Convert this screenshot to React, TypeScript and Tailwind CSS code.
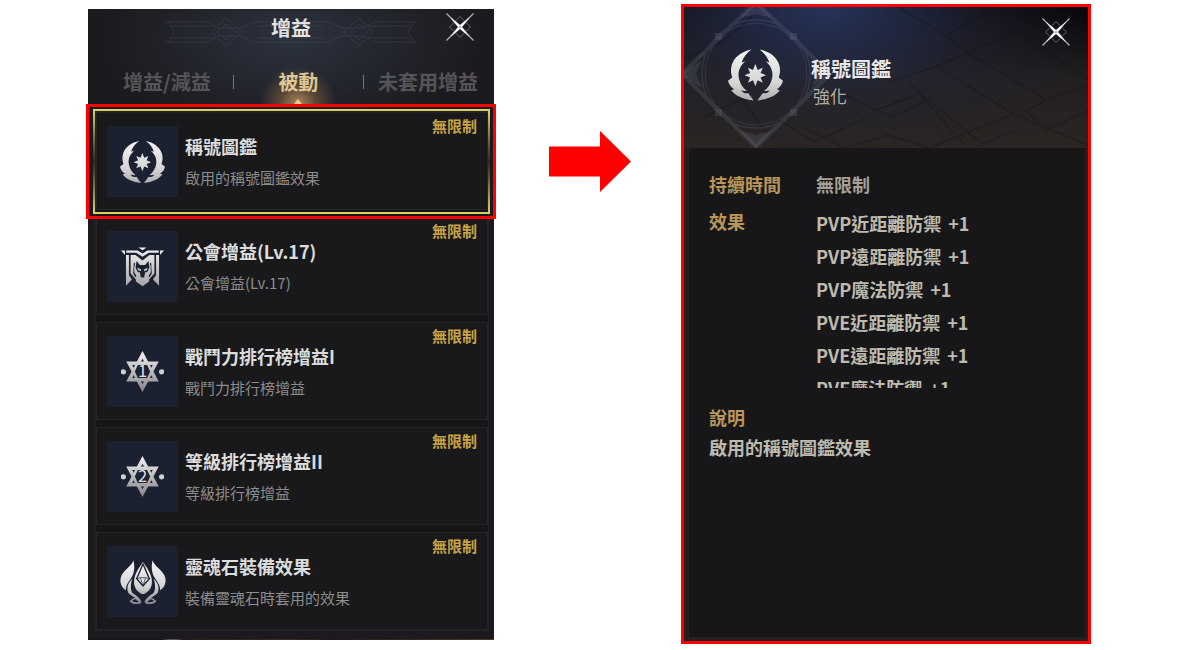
import React from "react";

const FONT = "font-['Noto_Sans_CJK_TC',sans-serif]";

const WING =
  "M70 0C42 5 18 22 10 46C5 62 7 74 11 86L-2 96C1 108 8 117 17 122L8 125C20 142 45 153 77 157C72 150 65 142 60 134C51 137 43 132 38 126C46 128 52 127 56 128C43 117 34 104 31 86C28 66 36 48 52 36L40 40C45 24 55 11 70 0Z";

function WingEmblem({ id, className }: { id: string; className: string }) {
  return (
    <svg viewBox="-2 0 169 157" className={className} aria-hidden="true">
      <defs>
        <linearGradient id={id} gradientUnits="userSpaceOnUse" x1="0" y1="0" x2="0" y2="157">
          <stop offset="0" stopColor="#f2f2f2" />
          <stop offset="0.65" stopColor="#d6d6d6" />
          <stop offset="1" stopColor="#adadaf" />
        </linearGradient>
      </defs>
      <g fill={`url(#${id})`}>
        <path d={WING} />
        <path d={WING} transform="matrix(-1 0 0 1 165 0)" />
        <path d="M82 45L89 63L105 56L98 72L115 79L98 86L105 102L89 95L82 113L75 95L59 102L66 86L49 79L66 72L59 56L75 63Z" />
      </g>
    </svg>
  );
}

function GuildIcon() {
  return (
    <svg viewBox="0 0 130 120" className="h-10 w-[43px]" aria-hidden="true">
      <defs>
        <linearGradient id="guild" gradientUnits="userSpaceOnUse" x1="0" y1="0" x2="0" y2="120">
          <stop offset="0" stopColor="#f4f4f4" />
          <stop offset="1" stopColor="#a3a3a6" />
        </linearGradient>
      </defs>
      <g fill="url(#guild)">
        <path d="M53 1H77L65 9Z" />
        <path d="M0 10H12V24ZM130 10H118V24Z" />
        <path d="M16 10H50L65 19L80 10H114V17H84L65 29L46 17H16Z" />
        <path d="M15 24H24V84L33 98L15 117Z" />
        <path d="M115 24H106V84L97 98L115 117Z" />
        <path d="M29 24H44L65 40L86 24H101V80L90 92L85 98V104L65 118L45 104V98L40 92L29 80Z" />
      </g>
      <g fill="#1c2132">
        <path d="M39 46L43 50L40 60V76L47 88L43 90L37 80Z" />
        <path d="M91 46L87 50L90 60V76L83 88L87 90L93 80Z" />
        <path d="M47 42L57 54H73L83 42L86 62L79 76L73 76L70 92H60L57 76L51 76L44 62Z" />
      </g>
      <g fill="url(#guild)">
        <path d="M49 62L60 67V73L52 70ZM81 62L70 67V73L78 70Z" />
      </g>
    </svg>
  );
}

function StarIcon({ digit }: { digit: string }) {
  const id = `rank-${digit}`;
  return (
    <svg viewBox="0 0 130 124" className="h-[41px] w-[43px]" aria-hidden="true">
      <defs>
        <linearGradient id={id} gradientUnits="userSpaceOnUse" x1="0" y1="0" x2="0" y2="124">
          <stop offset="0" stopColor="#f2f2f2" />
          <stop offset="1" stopColor="#858588" />
        </linearGradient>
      </defs>
      <g fill="none" stroke={`url(#${id})`} strokeWidth="11">
        <path d="M65 12L105 87H25Z" />
        <path d="M65 112L25 37H105Z" />
      </g>
      <path d="M51 42H79L88 62L79 82H51L42 62Z" fill="#1c2132" />
      <circle cx="7" cy="63" r="8" fill="#cfcfcf" />
      <circle cx="123" cy="63" r="8" fill="#cfcfcf" />
      <text
        x="65"
        y="80"
        textAnchor="middle"
        fontSize="50"
        fill="#e0e0e0"
        className="font-['Noto_Sans_CJK_TC',sans-serif]"
      >
        {digit}
      </text>
    </svg>
  );
}

function SoulSide() {
  return (
    <>
      <path
        d="M40 1C36 20 8 30 2 54C-1 70 6 84 18 91C17 76 26 66 33 55C42 42 46 22 40 1Z"
        fill="url(#soul)"
      />
      <path d="M37 56C27 66 20 78 23 92C27 98 32 99 38 101C30 86 32 70 37 56Z" fill="url(#soul)" />
      <g fill="none" stroke="url(#soul)">
        <path d="M26 93C34 108 53 106 61 128" strokeWidth="8" />
        <path d="M31 121C40 132 52 131 61 127" strokeWidth="6" />
        <path d="M35 121C42 113 50 115 54 122" strokeWidth="4" />
      </g>
    </>
  );
}

function SoulIcon() {
  return (
    <svg viewBox="0 0 138 132" className="h-11 w-[46px]" aria-hidden="true">
      <defs>
        <linearGradient id="soul" gradientUnits="userSpaceOnUse" x1="0" y1="0" x2="0" y2="132">
          <stop offset="0" stopColor="#f6f6f6" />
          <stop offset="0.6" stopColor="#d5d5d5" />
          <stop offset="1" stopColor="#85858a" />
        </linearGradient>
      </defs>
      <SoulSide />
      <g transform="matrix(-1 0 0 1 138 0)">
        <SoulSide />
      </g>
      <path
        d="M69 6C62 18 47 34 43 56C39 80 50 96 69 103C88 96 99 80 95 56C91 34 76 18 69 6Z"
        fill="url(#soul)"
      />
      <g fill="none" stroke="#1d2233" strokeWidth="4">
        <path d="M69 12L50 56L69 78L88 56Z" />
        <path d="M51 56L61 53H77L87 56M61 53L69 78L77 53" strokeWidth="2" />
      </g>
    </svg>
  );
}

function CloseButton({ label }: { label: string }) {
  return (
    <button type="button" aria-label={label} className="block size-7 cursor-pointer">
      <svg viewBox="0 0 28 28" className="size-7" aria-hidden="true">
        <path
          d="M14 3.500L18.500 8L14 12.500L9.500 8ZM14 15.500L18.500 20L14 24.500L9.500 20ZM8 9.500L12.500 14L8 18.500L3.500 14ZM20 9.500L24.500 14L20 18.500L15.500 14Z"
          fill="none"
          stroke="#66666b"
        />
        <path d="M0.500 0.500L27.500 27.500M27.500 0.500L0.500 27.500" stroke="#b4b4b6" strokeWidth="1.200" />
        <path d="M5 5L14.900 13.100L23 23L13.100 14.900ZM23 5L13.100 13.100L5 23L14.900 14.900Z" fill="#fff" stroke="#fff" strokeWidth="0.500" />
      </svg>
    </button>
  );
}

function HeaderOrnament() {
  return (
    <svg viewBox="0 0 250 34" className="h-[34px] w-[250px]" fill="none" stroke="#46505c" aria-hidden="true">
      <path d="M0 7H42L52 13H74L88 7H162L176 13H198L208 7H250M0 27H42L52 21H74L88 27H162L176 21H198L208 27H250M6 11H46M6 23H46M92 11H158M92 23H158M204 11H244M204 23H244M2 7L8 17L2 27M248 7L242 17L248 27" />
      <path d="M60 3L75 17L60 31L45 17ZM60 9L69 17L60 25L51 17ZM193 3L208 17L193 31L178 17ZM193 9L202 17L193 25L184 17Z" />
    </svg>
  );
}

interface Buff {
  title: string;
  note: string;
  icon: React.ReactNode;
}

const buffs: Buff[] = [
  { title: "稱號圖鑑", note: "啟用的稱號圖鑑效果", icon: <WingEmblem id="wing-small" className="h-[42px] w-[45px]" /> },
  { title: "公會增益(Lv.17)", note: "公會增益(Lv.17)", icon: <GuildIcon /> },
  { title: "戰鬥力排行榜增益I", note: "戰鬥力排行榜增益", icon: <StarIcon digit="1" /> },
  { title: "等級排行榜增益II", note: "等級排行榜增益", icon: <StarIcon digit="2" /> },
  { title: "靈魂石裝備效果", note: "裝備靈魂石時套用的效果", icon: <SoulIcon /> },
];

const effects = [
  { name: "PVP近距離防禦", value: "+1" },
  { name: "PVP遠距離防禦", value: "+1" },
  { name: "PVP魔法防禦", value: "+1" },
  { name: "PVE近距離防禦", value: "+1" },
  { name: "PVE遠距離防禦", value: "+1" },
  { name: "PVE魔法防禦", value: "+1" },
];

function SelectionFrame() {
  return (
    <>
      <span className="pointer-events-none absolute -top-1 -right-[3px] -bottom-[5px] -left-1 flex justify-between border-y-2 border-[#d6cf66]">
        <span className="w-0.5 bg-[linear-gradient(#d6cf66,#5b5830_35%,#2c2b20_50%,#5b5830_65%,#d6cf66)]" />
        <span className="w-0.5 bg-[linear-gradient(#d6cf66,#5b5830_35%,#2c2b20_50%,#5b5830_65%,#d6cf66)]" />
      </span>
      <span className="pointer-events-none absolute -top-[9px] -right-[9px] -bottom-[10px] -left-[11px] border-3 border-[#fe0000]" />
    </>
  );
}

function BuffCard({ buff, selected }: { buff: Buff; selected: boolean }) {
  return (
    <li
      className={`relative flex h-[98px] items-start gap-[7px] border border-[#242427] bg-[#19191b] px-2.5 pt-[13px] ${
        selected ? "z-10" : ""
      }`}
    >
      <div className="flex size-[71px] shrink-0 items-center justify-center bg-[#1c2132]">{buff.icon}</div>
      <div className="min-w-0 grow pt-1.5">
        <h2 className="text-lg leading-7 font-bold whitespace-nowrap text-[#dcdcdc]">{buff.title}</h2>
        <p className="pt-1.5 text-[15px] leading-6 whitespace-nowrap text-[#8c8c8c]">{buff.note}</p>
      </div>
      <span className="absolute top-px right-2.5 text-[15px] leading-6 font-bold text-[#c8a544]">無限制</span>
      {selected && <SelectionFrame />}
    </li>
  );
}

function BuffPanel() {
  return (
    <section className="mt-[9px] min-w-0 self-start bg-[#1c1a1e] bg-[radial-gradient(ellipse_190px_100px_at_50%_30px,#2b323e,#1c1a1e)] bg-no-repeat">
      <header className="relative flex h-[38px] items-center justify-center">
        <div className="absolute inset-x-0 top-1.5 flex justify-center opacity-40">
          <HeaderOrnament />
        </div>
        <h1 className="relative text-xl leading-7 font-bold text-[#e2e2e2]">增益</h1>
        <div className="absolute top-1 right-5">
          <CloseButton label="關閉增益" />
        </div>
      </header>
      <nav className="flex h-[57px] items-center justify-between pt-3 pr-4 pl-[35px] text-xl leading-8 font-bold text-[#555558]">
        <div className="flex items-center gap-[22px]">
          <button type="button" className="cursor-pointer whitespace-nowrap">增益/減益</button>
          <span className="h-3.5 w-px bg-[#77777a]" />
        </div>
        <button
          type="button"
          className="relative flex h-full w-20 cursor-pointer items-center justify-center bg-[radial-gradient(ellipse_38px_38px_at_50%_100%,#a98659,#5b4937_45%,transparent)] text-[#dfc693]"
        >
          被動
          <span className="absolute bottom-0 left-9 border-x-4 border-b-5 border-x-transparent border-b-[#f5c48c]" />
        </button>
        <div className="flex items-center gap-3.5">
          <span className="h-3.5 w-px bg-[#77777a]" />
          <button type="button" className="cursor-pointer whitespace-nowrap">未套用增益</button>
        </div>
      </nav>
      <div className="pt-2 pr-1.5 pb-[9px] pl-2">
        <ul className="flex flex-col gap-[7px] bg-[#151517] outline outline-[#242226]">
          {buffs.map((buff, i) => (
            <BuffCard key={buff.title} buff={buff} selected={i === 0} />
          ))}
        </ul>
      </div>
      <div className="h-px bg-[linear-gradient(90deg,#181416_18%,#55555a_20%,#55555a_22%,#241c18_23%,#3a2d24_50%,#201a18_60%,#49392b)]" />
    </section>
  );
}

function HeroBackdrop() {
  return (
    <svg
      viewBox="0 0 404 141"
      preserveAspectRatio="xMinYMin slice"
      className="absolute inset-0 size-full"
      fill="none"
      aria-hidden="true"
    >
      <g stroke="#101015" strokeWidth="1.500" opacity="0.3">
        <path d="M203 76L252 59L330 107L292 122L245 141M226 78L298 137L330 124M252 59L284 46L362 93L404 78M284 46L330 24L404 72M160 141L205 128L245 141M190 104L235 87L280 137M120 120L160 141M330 107L404 138M362 93L342 104L362 123L404 104M160 88L208 110L248 91M90 110L130 135L180 112M0 52L40 34L68 10M20 110L58 92L84 128M214 0L262 28L284 46M262 28L314 0" />
      </g>
      <g stroke="#7f8494" opacity="0.2">
        <circle cx="72" cy="67" r="54" strokeWidth="1.500" />
        <circle cx="72" cy="67" r="51" strokeWidth="1" />
        <path d="M72 -5L146 67L72 140L-2 67Z" strokeWidth="4" />
      </g>
      <g fill="#7f8494" opacity="0.2">
        <path d="M66 0H78L88 11L72 7L56 11ZM0 65L18 53L12 67L18 81L0 69ZM146 67L128 55L133 67L128 79ZM72 141L56 124L72 128L88 124Z" />
        <path d="M31 26H38V33H31ZM106 26H113V33H106ZM31 102H38V109H31ZM106 102H113V109H106Z" />
      </g>
    </svg>
  );
}

function DetailPanel() {
  return (
    <section className="mt-1 flex min-w-0 flex-col self-start border-3 border-[#fe0000] bg-[#242022]">
      <header className="relative flex h-[141px] items-start overflow-hidden bg-[radial-gradient(ellipse_270px_150px_at_35%_0%,#26335a,#24273680_60%,transparent),linear-gradient(180deg,#050508,#221f22_50%,#2b2523)]">
        <HeroBackdrop />
        <div className="relative flex min-w-0 grow items-start pt-[42px] pl-11">
          <WingEmblem id="wing-large" className="h-[52px] w-[55px] shrink-0" />
          <div className="min-w-0 pt-[5px] pl-7">
            <h2 className="text-xl leading-[30px] font-bold whitespace-nowrap text-[#e8e8e8]">稱號圖鑑</h2>
            <p className="px-0.5 text-[17px] leading-6 text-[#b5b0a6]">強化</p>
          </div>
        </div>
        <div className="absolute top-[11px] right-[18px]">
          <CloseButton label="關閉詳細資訊" />
        </div>
      </header>
      <div className="mr-[3px] mb-1 ml-[5px] flex h-[489px] flex-col bg-[#17171a] px-5 pt-[22px] text-lg font-bold text-[#bebaad]">
        <dl className="grid grid-cols-[107px_1fr] gap-y-[9px]">
          <dt className="leading-7 text-[#b99559]">持續時間</dt>
          <dd className="leading-7 text-[#a5a197]">無限制</dd>
          <dt className="leading-7 text-[#b99559]">效果</dt>
          <dd>
            <ul className="h-[181px] overflow-hidden">
              {effects.map((effect) => (
                <li key={effect.name} className="flex gap-[7px] leading-[33px] whitespace-nowrap">
                  <span>{effect.name}</span>
                  <span>{effect.value}</span>
                </li>
              ))}
            </ul>
          </dd>
        </dl>
        <h3 className="pt-[13px] leading-8 text-[#b99559]">說明</h3>
        <p className="leading-7">啟用的稱號圖鑑效果</p>
      </div>
    </section>
  );
}

export default function App() {
  return (
    <main
      lang="zh-Hant"
      className={`grid min-h-screen grid-cols-[406fr_187fr_410fr] items-start bg-white pr-[89px] pl-[88px] ${FONT}`}
    >
      <BuffPanel />
      <div className="flex justify-center pt-[131px] pl-1">
        <svg viewBox="0 0 82 61" className="h-[61px] w-[82px]" aria-label="下一步" role="img">
          <path d="M0 15.500H51V0L82 30.500L51 61V45.500H0Z" fill="#fe0000" />
        </svg>
      </div>
      <DetailPanel />
    </main>
  );
}
